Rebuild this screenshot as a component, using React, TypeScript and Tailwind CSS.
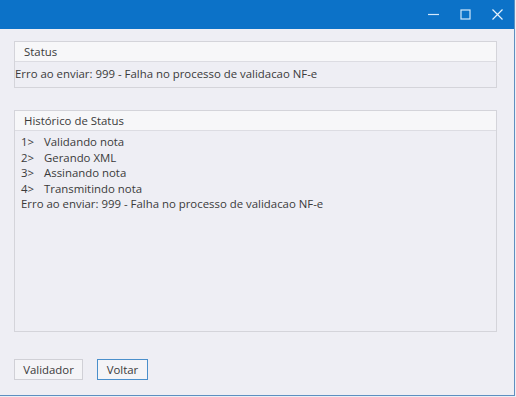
import { type FC } from "react";

const font = { fontFamily: '"Open Sans", "Noto Sans", sans-serif' };

const historico = [
  { n: "1>", t: "Validando nota" },
  { n: "2>", t: "Gerando XML" },
  { n: "3>", t: "Assinando nota" },
  { n: "4>", t: "Transmitindo nota" },
];

const TitleBar: FC = () => (
  <div className="flex h-[29px] items-center justify-end bg-[#0c72c8] pr-[1px]">
    <button className="flex h-[29px] w-[32px] items-center justify-center">
      <svg width="11" height="11" viewBox="0 0 11 11">
        <path d="M0 5.5h11" stroke="#d3e8fb" strokeWidth="1.2" />
      </svg>
    </button>
    <button className="flex h-[29px] w-[32px] items-center justify-center">
      <svg width="11" height="11" viewBox="0 0 11 11">
        <rect x="1" y="1" width="9" height="9" fill="none" stroke="#d3e8fb" strokeWidth="1.2" />
      </svg>
    </button>
    <button className="flex h-[29px] w-[32px] items-center justify-center">
      <svg width="11" height="11" viewBox="0 0 11 11">
        <path d="M0.5 0.5l10 10M10.5 0.5l-10 10" stroke="#e6f2fd" strokeWidth="1.2" />
      </svg>
    </button>
  </div>
);

const GroupBox: FC<{ title: string; className?: string; children: React.ReactNode }> = ({
  title,
  className,
  children,
}) => (
  <div className={`flex flex-col border border-[#d4d4da] ${className ?? ""}`}>
    <div className="h-[20px] border-b border-[#dcdce2] bg-[#f7f7f9] pl-[9px] leading-[19px]">
      {title}
    </div>
    <div className="flex-1">{children}</div>
  </div>
);

export default function App() {
  return (
    <div
      className="h-[397px] w-[516px] bg-[#eeeef4] text-[11.4px] text-[#3a3a3a]"
      style={font}
    >
      <div className="flex h-[396px] w-[515px] flex-col border-r border-b border-[#5d8fc0] bg-[#eeeef4]">
        <TitleBar />
        <div className="flex flex-1 flex-col px-[14px] pt-[12px]">
          <GroupBox title="Status" className="mr-[3px] h-[47px]">
            <div className="pt-[3px] leading-[18px]">
              Erro ao enviar: 999 - Falha no processo de validacao NF-e
            </div>
          </GroupBox>
          <GroupBox title="Histórico de Status" className="mr-[3px] mt-[22px] h-[222px]">
            <div className="pl-[6px] pt-[3px] leading-[15.5px]">
              {historico.map((h) => (
                <div key={h.n} className="flex">
                  <span className="w-[23px]">{h.n}</span>
                  <span>{h.t}</span>
                </div>
              ))}
              <div>Erro ao enviar: 999 - Falha no processo de validacao NF-e</div>
            </div>
          </GroupBox>
          <div className="mt-[27px] flex gap-[14px]">
            <button className="h-[21px] w-[69px] border border-[#d0d0d6] bg-[#f4f4f7] leading-[19px]">
              Validador
            </button>
            <button className="h-[21px] w-[51px] border border-[#4a8fcb] bg-[#f4f4f7] leading-[19px]">
              Voltar
            </button>
          </div>
        </div>
      </div>
    </div>
  );
}
